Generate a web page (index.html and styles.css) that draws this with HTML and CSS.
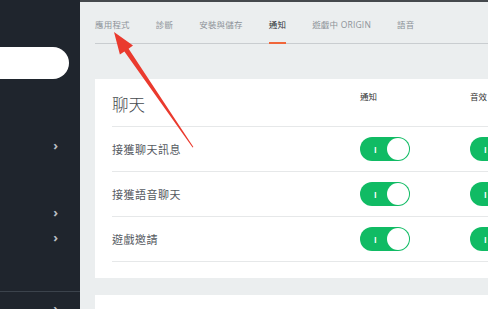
FILE: index.html
```html
<!DOCTYPE html>
<html lang="zh-Hant">
<head>
  <meta charset="UTF-8" />
  <title>通知設定</title>
  <link rel="stylesheet" href="styles.css">
</head>
<body>
  <div class="app">
    <!-- barra lateral -->
    <aside class="sidebar">
      <div class="pill"></div>
      <div class="side-item first"><span class="chev">›</span></div>
      <div class="side-item second"><span class="chev">›</span></div>
      <div class="side-item"><span class="chev">›</span></div>
      <div class="side-sep"></div>
      <div class="side-item last"><span class="chev">›</span></div>
    </aside>

    <main class="main">
      <nav class="tabs">
        <span class="tab">應用程式</span>
        <span class="tab">診斷</span>
        <span class="tab">安裝與儲存</span>
        <span class="tab active">通知</span>
        <span class="tab">遊戲中 ORIGIN</span>
        <span class="tab">語音</span>
      </nav>

      <section class="card">
        <div class="card-head">
          <h2>聊天</h2>
          <div class="col-label">通知</div>
          <div class="col-label">音效</div>
        </div>
        <div class="row">
          <div class="row-label">接獲聊天訊息</div>
          <div class="col"><span class="toggle"><i>I</i><b></b></span></div>
          <div class="col"><span class="toggle"><i>I</i><b></b></span></div>
        </div>
        <div class="row">
          <div class="row-label">接獲語音聊天</div>
          <div class="col"><span class="toggle"><i>I</i><b></b></span></div>
          <div class="col"><span class="toggle"><i>I</i><b></b></span></div>
        </div>
        <div class="row">
          <div class="row-label">遊戲邀請</div>
          <div class="col"><span class="toggle"><i>I</i><b></b></span></div>
          <div class="col"><span class="toggle"><i>I</i><b></b></span></div>
        </div>
      </section>

      <section class="card next"></section>
    </main>
  </div>

  <!-- flecha roja de la captura -->
  <svg class="arrow" width="488" height="309" viewBox="0 0 488 309">
    <polygon fill="#ea3a2e" points="114,32 133,45.6 128.6,48.7 193.4,147 192.6,147.5 124.4,51.5 119.9,54.6"/>
  </svg>
</body>
</html>
```

FILE: styles.css
```css
body {
  margin: 0;
  width: 488px;
  height: 309px;
  overflow: hidden;
  font-family: 'Open Sans', 'Noto Sans CJK TC', sans-serif;
  background: #ebeeef;
}

.app {
  display: flex;
  height: 309px;
}

.sidebar {
  width: 80px;
  flex-shrink: 0;
  background: #1f252d;
  padding-top: 47px;
  box-sizing: border-box;
}

.pill {
  width: 69px;
  height: 32px;
  background: #fff;
  border-radius: 0 16px 16px 0;
}

.side-item {
  height: 25px;
  display: flex;
  align-items: center;
  justify-content: flex-end;
  padding-right: 22px;
}

.side-item.first { margin-top: 54px; }
.side-item.second { margin-top: 42px; }
.side-item.last { height: 16px; margin-top: 8px; }

.chev {
  color: #b8bdc3;
  font-size: 13px;
  font-weight: bold;
  line-height: 1;
}

.side-sep {
  height: 1px;
  background: #3b434c;
  margin-top: 41px;
}

.main {
  flex: 1;
  padding-left: 15px;
  border-top: 2px solid #45494d;
  overflow: hidden;
}

.tabs {
  display: flex;
  gap: 26px;
  height: 41px;
  border-bottom: 1px solid #c9cdd0;
  margin-bottom: 35px;
}

.tab {
  font-size: 8.5px;
  color: #8d9399;
  letter-spacing: 0.2px;
  padding-top: 16px;
  white-space: nowrap;
  box-sizing: border-box;
}

.tab.active {
  color: #2f3338;
  border-bottom: 2px solid #f0663a;
  margin-bottom: -1px;
}

.card {
  background: #fff;
  width: 520px;
  padding: 0 0 16px 17px;
  box-sizing: border-box;
}

.card-head {
  display: flex;
  height: 47px;
}

.card-head h2 {
  margin: 0;
  padding-top: 13px;
  width: 248px;
  flex-shrink: 0;
  font-size: 16.5px;
  font-weight: 300;
  color: #45494e;
}

.col-label {
  width: 110px;
  flex-shrink: 0;
  font-size: 8.5px;
  color: #333;
  padding-top: 11px;
}

.row {
  display: flex;
  align-items: center;
  height: 44px;
  border-top: 1px solid #e6e8e9;
}

.row:last-child {
  border-bottom: 1px solid #e6e8e9;
}

.row-label {
  width: 248px;
  flex-shrink: 0;
  font-size: 11px;
  color: #555a5f;
  letter-spacing: 0.5px;
}

.col {
  width: 110px;
  flex-shrink: 0;
  display: flex;
}

.toggle {
  width: 50px;
  height: 24px;
  background: #10bb64;
  border-radius: 12px;
  display: flex;
  align-items: center;
  justify-content: space-between;
  box-sizing: border-box;
  padding: 0 1px 0 14px;
}

.toggle i {
  font-style: normal;
  font-size: 8px;
  font-weight: bold;
  color: #fff;
}

.toggle b {
  width: 22px;
  height: 22px;
  border-radius: 50%;
  background: #fff;
}

.card.next {
  margin-top: 17px;
  height: 40px;
}

.arrow {
  position: absolute;
  left: 0;
  top: 0;
}
```
